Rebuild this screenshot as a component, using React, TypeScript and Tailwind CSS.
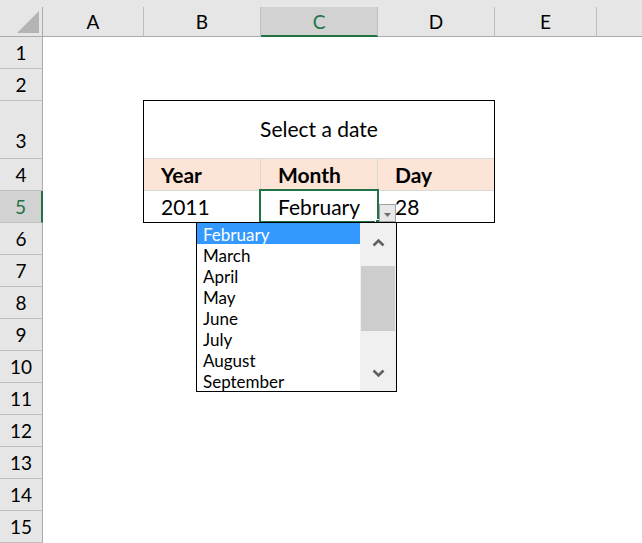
import React from "react";

const cols = [
  { label: "A", w: "w-[101px]" },
  { label: "B", w: "w-[117px]" },
  { label: "C", w: "w-[117px]", sel: true },
  { label: "D", w: "w-[117px]" },
  { label: "E", w: "w-[102px]" },
];

const rows = Array.from({ length: 15 }, (_, i) => i + 1);
const months = ["February", "March", "April", "May", "June", "July", "August", "September"];

export default function App() {
  return (
    <div className="w-[642px] h-[543px] overflow-hidden bg-white text-black font-['Lato','Noto_Sans',sans-serif] flex flex-col">
      {/* Column header row */}
      <div className="flex h-[37px] bg-[#e6e6e6] pt-[7px] shrink-0">
        <div className="w-[43px] h-[30px] border-r border-b border-[#ababab] relative">
          <svg className="absolute left-0 top-0" width="42" height="29" viewBox="0 0 42 29">
            <polygon points="39,4 39,26 17,26" fill="#b4b4b4" />
          </svg>
        </div>
        {cols.map((c) =>
          c.sel ? (
            <div
              key={c.label}
              className={`${c.w} h-[30px] border-r border-r-[#bfbfbf] border-b-2 border-b-[#217346] bg-[#d2d2d2] text-[#217346] flex items-center justify-center text-[19px] leading-none`}
            >
              {c.label}
            </div>
          ) : (
            <div
              key={c.label}
              className={`${c.w} h-[30px] border-r border-r-[#bfbfbf] border-b border-b-[#ababab] flex items-center justify-center text-[19px] leading-none`}
            >
              {c.label}
            </div>
          )
        )}
        <div className="flex-1 h-[30px] border-b border-[#ababab]" />
      </div>

      <div className="flex flex-1">
        {/* Row headers */}
        <div className="w-[43px] flex flex-col bg-[#e6e6e6] shrink-0">
          {rows.map((r) =>
            r === 5 ? (
              <div
                key={r}
                className="h-[32px] border-b border-b-[#bfbfbf] border-r-2 border-r-[#217346] bg-[#d2d2d2] text-[#217346] flex items-center justify-center text-[19px] leading-none"
              >
                {r}
              </div>
            ) : (
              <div
                key={r}
                className={`${r === 3 ? "h-[58px] items-end pb-[8px]" : "h-[32px] items-center"} border-b border-b-[#bfbfbf] border-r border-r-[#ababab] flex justify-center text-[19px] leading-none`}
              >
                {r}
              </div>
            )
          )}
        </div>

        {/* Sheet */}
        <div className="relative flex-1 bg-white">
          <div className="ml-[100px] mt-[63px] w-[352px] border border-black flex flex-col text-[21px] leading-none">
            <div className="h-[58px] border-b border-[#d9d9d9] flex items-center justify-center pb-[3px]">
              Select a date
            </div>
            <div className="h-[32px] border-b border-[#d9d9d9] bg-[#fce4d6] flex font-bold">
              <div className="w-[117px] border-r border-[#d9d9d9] flex items-center pl-[17px]">Year</div>
              <div className="w-[117px] border-r border-[#d9d9d9] flex items-center pl-[17px]">Month</div>
              <div className="flex-1 flex items-center pl-[17px]">Day</div>
            </div>
            <div className="h-[31px] flex">
              <div className="w-[117px] flex items-center pl-[17px] pb-[1px]">2011</div>
              <div className="w-[117px] flex items-center pl-[17px] pb-[1px]">February</div>
              <div className="flex-1 flex items-center pl-[17px] pb-[1px]">28</div>
            </div>
          </div>

          {/* Selection outline */}
          <div className="absolute left-[216px] top-[152px] w-[120px] h-[34px] border-2 border-[#217346]" />
          <div className="absolute left-[332px] top-[182px] w-[5px] h-[5px] bg-[#217346] border border-white" />

          {/* Dropdown button */}
          <div className="absolute left-[336px] top-[167px] w-[17px] h-[18px] border border-[#a0a0a0] bg-[#e8e8e8] flex items-center justify-center">
            <svg width="7" height="4" viewBox="0 0 7 4" className="mt-[3px]">
              <polygon points="0,0 7,0 3.5,4" fill="#6f6f6f" />
            </svg>
          </div>

          {/* Dropdown list */}
          <div className="absolute left-[153px] top-[185px] w-[201px] h-[170px] border border-black bg-white flex">
            <div className="w-[163px] flex flex-col">
              {months.map((m, i) => (
                <div
                  key={m}
                  className={`h-[21px] pl-[6px] pt-[2px] flex items-center text-[17px] leading-none ${
                    i === 0 ? "bg-[#3399ff] text-white" : "text-black"
                  }`}
                >
                  {m}
                </div>
              ))}
            </div>
            <div className="flex-1 bg-[#f0f0f0] flex flex-col items-stretch">
              <div className="h-[38px] flex items-center justify-center">
                <svg width="13" height="9" viewBox="0 0 13 9">
                  <polyline points="1.5,7.5 6.5,2.5 11.5,7.5" fill="none" stroke="#606060" strokeWidth="2.6" />
                </svg>
              </div>
              <div className="h-[5px]" />
              <div className="h-[65px] ml-[1px] mr-[1px] bg-[#cdcdcd]" />
              <div className="flex-1" />
              <div className="h-[36px] flex items-center justify-center">
                <svg width="13" height="9" viewBox="0 0 13 9">
                  <polyline points="1.5,1.5 6.5,6.5 11.5,1.5" fill="none" stroke="#606060" strokeWidth="2.6" />
                </svg>
              </div>
            </div>
          </div>
        </div>
      </div>
    </div>
  );
}
